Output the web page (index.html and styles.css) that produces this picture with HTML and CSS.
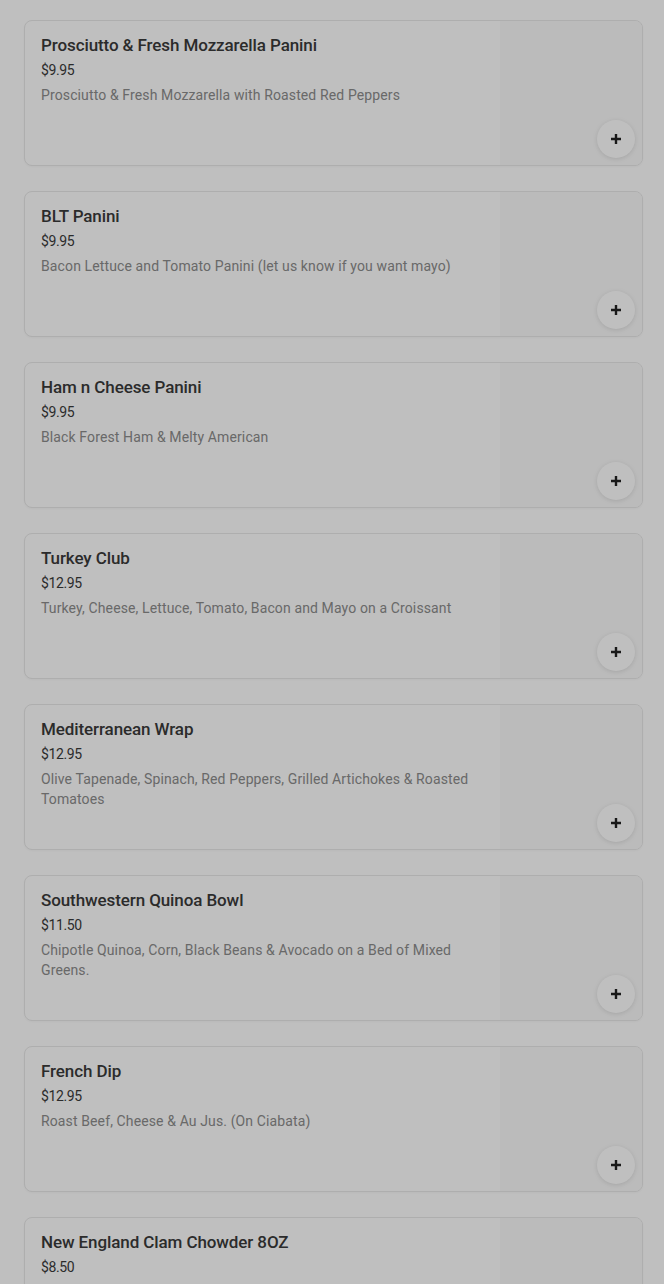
FILE: index.html
```html
<!DOCTYPE html>
<html lang="en">

<head>
    <meta charset="UTF-8" />
    <title>Menu</title>
    <meta name="viewport" content="width=device-width, initial-scale=1.0" />
    <link rel="stylesheet" href="styles.css">
</head>

<body>

    <div class="menu-list">
        <div class="item-card">
            <div class="item-info">
                <div class="item-name">Prosciutto &amp; Fresh Mozzarella Panini</div>
                <div class="item-price">$9.95</div>
                <div class="item-desc">Prosciutto &amp; Fresh Mozzarella with Roasted Red Peppers</div>
            </div>
            <div class="item-thumb">
                <button class="add-btn" aria-label="Add"><svg viewBox="0 0 12 12"><path d="M6 1v10M1 6h10" /></svg></button>
            </div>
        </div>

        <div class="item-card">
            <div class="item-info">
                <div class="item-name">BLT Panini</div>
                <div class="item-price">$9.95</div>
                <div class="item-desc">Bacon Lettuce and Tomato Panini (let us know if you want mayo)</div>
            </div>
            <div class="item-thumb">
                <button class="add-btn" aria-label="Add"><svg viewBox="0 0 12 12"><path d="M6 1v10M1 6h10" /></svg></button>
            </div>
        </div>

        <div class="item-card">
            <div class="item-info">
                <div class="item-name">Ham n Cheese Panini</div>
                <div class="item-price">$9.95</div>
                <div class="item-desc">Black Forest Ham &amp; Melty American</div>
            </div>
            <div class="item-thumb">
                <button class="add-btn" aria-label="Add"><svg viewBox="0 0 12 12"><path d="M6 1v10M1 6h10" /></svg></button>
            </div>
        </div>

        <div class="item-card">
            <div class="item-info">
                <div class="item-name">Turkey Club</div>
                <div class="item-price">$12.95</div>
                <div class="item-desc">Turkey, Cheese, Lettuce, Tomato, Bacon and Mayo on a Croissant</div>
            </div>
            <div class="item-thumb">
                <button class="add-btn" aria-label="Add"><svg viewBox="0 0 12 12"><path d="M6 1v10M1 6h10" /></svg></button>
            </div>
        </div>

        <div class="item-card">
            <div class="item-info">
                <div class="item-name">Mediterranean Wrap</div>
                <div class="item-price">$12.95</div>
                <div class="item-desc">Olive Tapenade, Spinach, Red Peppers, Grilled Artichokes &amp; Roasted Tomatoes</div>
            </div>
            <div class="item-thumb">
                <button class="add-btn" aria-label="Add"><svg viewBox="0 0 12 12"><path d="M6 1v10M1 6h10" /></svg></button>
            </div>
        </div>

        <div class="item-card">
            <div class="item-info">
                <div class="item-name">Southwestern Quinoa Bowl</div>
                <div class="item-price">$11.50</div>
                <div class="item-desc">Chipotle Quinoa, Corn, Black Beans &amp; Avocado on a Bed of Mixed Greens.</div>
            </div>
            <div class="item-thumb">
                <button class="add-btn" aria-label="Add"><svg viewBox="0 0 12 12"><path d="M6 1v10M1 6h10" /></svg></button>
            </div>
        </div>

        <div class="item-card">
            <div class="item-info">
                <div class="item-name">French Dip</div>
                <div class="item-price">$12.95</div>
                <div class="item-desc">Roast Beef, Cheese &amp; Au Jus. (On Ciabata)</div>
            </div>
            <div class="item-thumb">
                <button class="add-btn" aria-label="Add"><svg viewBox="0 0 12 12"><path d="M6 1v10M1 6h10" /></svg></button>
            </div>
        </div>

        <div class="item-card">
            <div class="item-info">
                <div class="item-name">New England Clam Chowder 8OZ</div>
                <div class="item-price">$8.50</div>
                <div class="item-desc">Creamy Clam Chowder with Oyster Crackers</div>
            </div>
            <div class="item-thumb">
                <button class="add-btn" aria-label="Add"><svg viewBox="0 0 12 12"><path d="M6 1v10M1 6h10" /></svg></button>
            </div>
        </div>
    </div>

    <!-- dimmed backdrop behind a modal -->
    <div class="backdrop"></div>

</body>

</html>
```

FILE: styles.css
```css
body {
    margin: 0;
    padding: 0;
    font-family: Roboto, "Noto Sans", sans-serif;
    background: #fff;
    color: #333;
}

.menu-list {
    display: flex;
    flex-direction: column;
    gap: 25px;
    padding: 20px 21px 20px 24px;
}

.item-card {
    display: flex;
    background: #fff;
    border: 1px solid #e8e8e8;
    border-radius: 8px;
    overflow: hidden;
    box-shadow: 0 1px 2px rgba(0, 0, 0, 0.03);
}

.item-info {
    flex: 1;
    padding: 12px 16px;
    min-width: 0;
}

.item-name {
    font-size: 17px;
    font-weight: 500;
    line-height: 24px;
    color: #3a3a3a;
    letter-spacing: -0.1px;
}

.item-price {
    margin-top: 4px;
    font-size: 14px;
    line-height: 18px;
    color: #3a3a3a;
    letter-spacing: -0.4px;
}

.item-desc {
    margin-top: 6px;
    font-size: 14px;
    line-height: 20px;
    color: #8c8c8c;
    letter-spacing: 0.12px;
}

.item-thumb {
    position: relative;
    width: 142px;
    height: 144px;
    flex-shrink: 0;
    background: #fafafa;
}

.add-btn {
    position: absolute;
    right: 7px;
    bottom: 7px;
    width: 38px;
    height: 38px;
    border: none;
    border-radius: 50%;
    background: #fff;
    padding: 0;
    display: flex;
    align-items: center;
    justify-content: center;
    box-shadow: 0 1px 5px rgba(0, 0, 0, 0.12);
    cursor: pointer;
}

.add-btn svg {
    width: 12px;
    height: 12px;
    stroke: #222;
    stroke-width: 2.4;
    fill: none;
}

.backdrop {
    position: fixed;
    inset: 0;
    background: rgba(0, 0, 0, 0.25);
}
```
